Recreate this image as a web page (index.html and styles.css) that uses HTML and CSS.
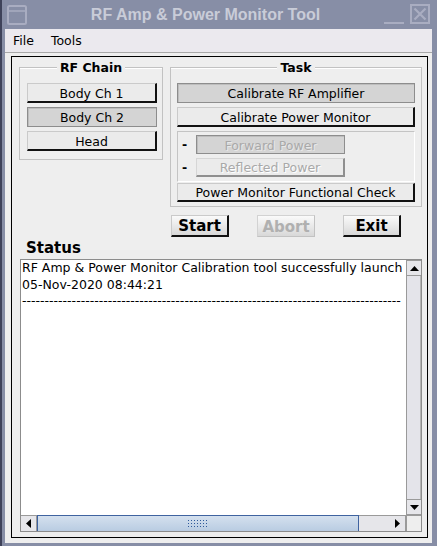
FILE: index.html
```html
<!DOCTYPE html>
<html>
<head>
<meta charset="utf-8">
<link rel="stylesheet" href="styles.css">
</head>
<body>
<div class="window">
  <div class="titlebar">
    <svg class="tb-icon" width="20" height="20" viewBox="0 0 20 20"><rect x="1" y="1" width="18" height="18" rx="1.5" fill="none" stroke="#a9adc1" stroke-width="2"/><line x1="1" y1="6" x2="19" y2="6" stroke="#a9adc1" stroke-width="1.5"/></svg>
    <div class="title">RF Amp &amp; Power Monitor Tool</div>
    <svg class="tb-min" width="20" height="20" viewBox="0 0 20 20"><line x1="0" y1="18" x2="20" y2="18" stroke="#a9adc1" stroke-width="2"/></svg>
    <svg class="tb-close" width="20" height="20" viewBox="0 0 20 20"><rect x="1" y="1" width="18" height="18" fill="none" stroke="#a9adc1" stroke-width="2"/><path d="M4.5 4.5 L15.5 15.5 M15.5 4.5 L4.5 15.5" stroke="#a9adc1" stroke-width="2.2"/></svg>
  </div>
  <div class="client">
    <div class="menubar"><span>File</span><span>Tools</span></div>
    <div class="content">
      <div class="mainbox">
        <div class="toprow">
          <div class="group group-rf">
            <div class="group-head"><span>RF Chain</span></div>
            <div class="group-body">
              <div class="btn">Body Ch 1</div>
              <div class="btn sel">Body Ch 2</div>
              <div class="btn">Head</div>
            </div>
          </div>
          <div class="group group-task">
            <div class="group-head"><span>Task</span></div>
            <div class="group-body">
              <div class="btn sel">Calibrate RF Amplifier</div>
              <div class="btn">Calibrate Power Monitor</div>
              <div class="subpanel">
                <div class="subrow"><span class="dash">-</span><div class="btn sub sel dis">Forward Power</div></div>
                <div class="subrow"><span class="dash">-</span><div class="btn sub dis">Reflected Power</div></div>
              </div>
              <div class="btn pmfc">Power Monitor Functional Check</div>
            </div>
          </div>
        </div>
        <div class="actions">
          <div class="btn big">Start</div>
          <div class="btn big dis">Abort</div>
          <div class="btn big">Exit</div>
        </div>
        <div class="status-label">Status</div>
        <div class="textarea">
          <div class="text">
            <div class="line">RF Amp &amp; Power Monitor Calibration tool successfully launch</div>
            <div class="line">05-Nov-2020 08:44:21</div>
            <div class="line">------------------------------------------------------------------------------------</div>
          </div>
          <div class="vscroll">
            <div class="sbtn"><svg width="9" height="5" viewBox="0 0 9 5"><path d="M0 5 L4.5 0 L9 5 Z" fill="#000"/></svg></div>
            <div class="vtrack"></div>
            <div class="sbtn"><svg width="9" height="5" viewBox="0 0 9 5"><path d="M0 0 L9 0 L4.5 5 Z" fill="#000"/></svg></div>
          </div>
          <div class="hscroll">
            <div class="sbtn"><svg width="5" height="9" viewBox="0 0 5 9"><path d="M5 0 L5 9 L0 4.5 Z" fill="#000"/></svg></div>
            <div class="hthumb"><div class="grip"></div></div>
            <div class="htrack"></div>
            <div class="sbtn"><svg width="5" height="9" viewBox="0 0 5 9"><path d="M0 0 L5 4.5 L0 9 Z" fill="#000"/></svg></div>
          </div>
          <div class="corner"></div>
        </div>
      </div>
    </div>
  </div>
</div>
</body>
</html>
```
FILE: styles.css
```css
html, body {
  margin: 0;
  padding: 0;
  background: #878ea6;
}
body {
  font-family: "DejaVu Sans", sans-serif;
  font-size: 12.5px;
  color: #000;
}
.window {
  width: 437px;
  height: 546px;
  box-sizing: border-box;
  background: #878ea6;
  border-left: 2px solid #3e4259;
  display: flex;
  flex-direction: column;
  overflow: hidden;
}
.titlebar {
  height: 29px;
  flex: none;
  display: flex;
  align-items: center;
  padding: 0 7px 0 5px;
}
.tb-icon { flex: none; margin-top: 1px; }
.title {
  flex: 1;
  text-align: center;
  font-family: "Liberation Sans", Arial, sans-serif;
  font-weight: bold;
  font-size: 16px;
  color: #c9ccd8;
  margin-top: 1px;
}
.tb-min { flex: none; margin-right: 6px; }
.tb-close { flex: none; margin-top: -1px; }

.client {
  flex: 1;
  margin: 0 5px 3px 3px;
  background: #eeeeee;
  display: flex;
  flex-direction: column;
  min-height: 0;
}
.menubar {
  height: 23px;
  flex: none;
  background: #ebe9ee;
  border-bottom: 1px solid #a8a8a8;
  display: flex;
  align-items: center;
  padding-left: 8px;
  gap: 17px;
}
.content {
  flex: 1;
  display: flex;
  padding: 3px 4px 5px 6px;
  min-height: 0;
}
.mainbox {
  flex: 1;
  border: 1px solid #000;
  display: flex;
  flex-direction: column;
  padding: 4px 5px 5px 7px;
  min-height: 0;
}
.toprow {
  display: flex;
  align-items: flex-start;
  gap: 7px;
}
.group { display: flex; flex-direction: column; }
.group-rf { width: 144px; flex: none; }
.group-task { flex: 1; }
.group-head {
  height: 13px;
  display: flex;
  align-items: flex-start;
  font-weight: bold;
  font-size: 12.5px;
  line-height: 13px;
}
.group-head span { padding: 0 3px; }
.group-head::before,
.group-head::after {
  content: "";
  flex: 1;
  height: 7px;
  margin-top: 6px;
  border-top: 1px solid #c2c2c2;
  box-shadow: inset 0 1px 0 #ffffff;
}
.group-head::before { border-left: 1px solid #c2c2c2; }
.group-head::after { border-right: 1px solid #c2c2c2; }
.group-body {
  border: 1px solid #c2c2c2;
  border-top: none;
  display: flex;
  flex-direction: column;
  gap: 4px;
}
.group-rf .group-body { padding: 9px 5px 8px 7px; }
.group-task .group-body { padding: 9px 6px 4px 6px; }

.btn {
  box-sizing: border-box;
  height: 20px;
  display: flex;
  align-items: center;
  justify-content: center;
  background: #ebebeb;
  border-style: solid;
  border-width: 1px 2px 2px 1px;
  border-color: #cacaca #111 #111 #cacaca;
  font-size: 12.5px;
  white-space: nowrap;
  padding-top: 1px;
}
.btn.sel {
  background: #d4d4d4;
  border-width: 1px;
  border-color: #8d8d8d;
  box-shadow: inset 1px 1px 0 #bdbdbd;
}
.btn.dis {
  color: #a9a9a9;
  text-shadow: 1px 1px 0 #ffffff;
  border-color: #d6d6d6 #8f8f8f #8f8f8f #d6d6d6;
  border-width: 1px 2px 2px 1px;
}
.btn.sel.dis {
  border-width: 1px;
  border-color: #8d8d8d;
  text-shadow: 1px 1px 0 #e8e8e8;
}
.subpanel {
  height: 51px;
  box-sizing: border-box;
  border: 1px solid;
  border-color: #c4c4c4 #ffffff #ffffff #c4c4c4;
  padding: 3px 0 0 4px;
  display: flex;
  flex-direction: column;
  gap: 4px;
  margin-bottom: -3px;
}
.subrow {
  display: flex;
  align-items: center;
  gap: 9px;
}
.dash {
  font-weight: bold;
  width: 5px;
}
.btn.sub { width: 149px; height: 19px; }
.btn.pmfc { height: 19px; }

.actions {
  display: flex;
  gap: 28px;
  margin-top: 8px;
  padding-left: 152px;
}
.btn.big {
  width: 58px;
  height: 22px;
  font-weight: bold;
  font-size: 15px;
  background: linear-gradient(#fafafa, #e6e6e6 60%, #d8d8d8);
}
.btn.big.dis {
  color: #b0b0b0;
  text-shadow: none;
  border-color: #d2d2d2 #c2c2c2 #c2c2c2 #d2d2d2;
  border-width: 1px;
}
.status-label {
  font-weight: bold;
  font-size: 15px;
  line-height: 17px;
  margin-top: 3px;
  padding-left: 7px;
}
.textarea {
  flex: 1;
  margin: 2px 0 0 1px;
  border: 1px solid #8c8c8c;
  background: #fff;
  display: grid;
  grid-template-columns: 1fr 15px;
  grid-template-rows: 1fr 16px;
  min-height: 0;
}
.text {
  overflow: hidden;
  padding-left: 1px;
  line-height: 16.5px;
  white-space: nowrap;
  font-size: 12.5px;
}
.line { white-space: nowrap; }
.vscroll {
  display: flex;
  flex-direction: column;
  background: #e6e6ea;
  border-left: 1px solid #9a9a9a;
}
.sbtn {
  box-sizing: border-box;
  width: 100%;
  height: 16px;
  flex: none;
  display: flex;
  align-items: center;
  justify-content: center;
  background: #e6e6ea;
  border: 1px solid #9a9a9a;
  border-left: none;
}
.vscroll .sbtn { height: 16px; border-right: none; }
.vtrack {
  flex: 1;
  background: #e4e4ea;
  border-right: 1px solid #b5b5b5;
}
.hscroll {
  display: flex;
  border-top: 1px solid #9a9a9a;
  background: #e6e6ea;
}
.hscroll .sbtn { width: 16px; height: 100%; border: none; border-right: 1px solid #9a9a9a; }
.hthumb {
  width: 322px;
  flex: none;
  box-sizing: border-box;
  border-left: 1px solid #3f63a0;
  border-right: 1px solid #3f63a0;
  border-top: 1px solid #3f63a0;
  margin-top: -1px;
  background: linear-gradient(#d4e0ee, #b9cce2);
  display: flex;
  align-items: center;
  justify-content: center;
}
.grip {
  width: 22px;
  height: 9px;
  background-image: radial-gradient(circle, #2f5a9a 0.7px, transparent 0.9px);
  background-size: 3px 3px;
}
.htrack {
  flex: 1;
  background: #e6e6ea;
}
.corner {
  background: #eeeeee;
  border-left: 1px solid #9a9a9a;
  border-top: 1px solid #9a9a9a;
}
```
